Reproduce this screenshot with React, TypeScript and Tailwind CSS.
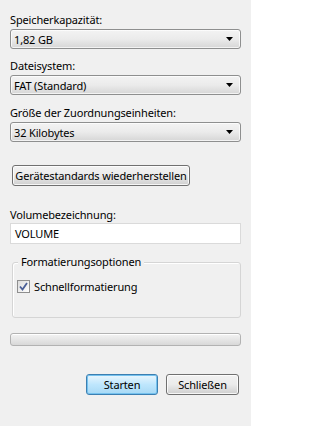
import React from "react"

const font = { fontFamily: '"Noto Sans", "Open Sans", sans-serif' }

function Combo({ value }: { value: string }) {
  return (
    <div className="mt-[2px] flex h-[20px] items-center justify-between rounded-[3px] border border-[#8e8f8f] bg-gradient-to-b from-[#f3f3f3] via-[#ebebeb] to-[#d6d6d6] pl-[3px] pr-[7px] shadow-[inset_0_0_0_1px_rgba(255,255,255,0.7)]">
      <span className="leading-none">{value}</span>
      <svg width="7" height="4" viewBox="0 0 7 4">
        <path d="M0 0H7L3.5 4Z" fill="#000" />
      </svg>
    </div>
  )
}

function Btn({ label, primary, className }: { label: string; primary?: boolean; className?: string }) {
  return (
    <button
      className={
        "flex h-[21px] items-center justify-center whitespace-nowrap rounded-[3px] border leading-none " +
        (primary
          ? "border-[#3c7fb1] bg-gradient-to-b from-[#eaf6fd] via-[#bee6fd] to-[#a7d9f5] shadow-[inset_0_0_0_1px_#74c1ee] "
          : "border-[#707070] bg-gradient-to-b from-[#f2f2f2] via-[#ebebeb] to-[#cfcfcf] shadow-[inset_0_0_0_1px_rgba(255,255,255,0.8)] ") +
        (className ?? "")
      }
    >
      {label}
    </button>
  )
}

export default function App() {
  return (
    <div className="h-[426px] w-[251px] bg-[#f0f0f0] px-[10px] pt-[12px] text-[11px] tracking-[-0.15px] text-black" style={font}>
      <div className="h-[15px] leading-[15px]">Speicherkapazität:</div>
      <Combo value="1,82 GB" />

      <div className="mt-[9px] h-[15px] leading-[15px]">Dateisystem:</div>
      <Combo value="FAT (Standard)" />

      <div className="mt-[10px] h-[15px] leading-[15px]">Größe der Zuordnungseinheiten:</div>
      <Combo value="32 Kilobytes" />

      <Btn label="Gerätestandards wiederherstellen" className="ml-[2px] mt-[23px] w-[178px]" />

      <div className="mt-[21px] h-[15px] leading-[15px]">Volumebezeichnung:</div>
      <div className="mt-[1px] flex h-[21px] items-center border border-[#dadada] bg-white pl-[4px] leading-none">VOLUME</div>

      {/* Formatierungsoptionen */}
      <div className="relative ml-[2px] mt-[18px] h-[56px] rounded-[3px] border border-[#d5d5d5] shadow-[inset_1px_1px_0_#ffffff]">
        <span className="absolute -top-[9px] left-[5px] bg-[#f0f0f0] px-[3px] leading-[15px]">Formatierungsoptionen</span>
        <div className="ml-[4px] mt-[16px] flex items-center gap-[4px]">
          <div className="flex h-[13px] w-[13px] items-center justify-center border border-[#8f8f8f] bg-gradient-to-br from-[#dcdcdc] to-[#ffffff]">
            <svg width="9" height="9" viewBox="0 0 9 9">
              <path d="M1 4.5L3.5 7.5L8 1" fill="none" stroke="#4a5f97" strokeWidth="1.8" />
            </svg>
          </div>
          <span className="leading-[15px]">Schnellformatierung</span>
        </div>
      </div>

      <div className="mt-[15px] h-[13px] rounded-[3px] border border-[#b2b2b2] bg-gradient-to-b from-[#f3f3f3] via-[#e6e6e6] to-[#d8d8d8] shadow-[inset_0_1px_0_#ffffff]" />

      <div className="mt-[28px] flex justify-end gap-[8px] pr-[2px]">
        <Btn label="Starten" primary className="w-[72px]" />
        <Btn label="Schließen" className="w-[73px]" />
      </div>
    </div>
  )
}
